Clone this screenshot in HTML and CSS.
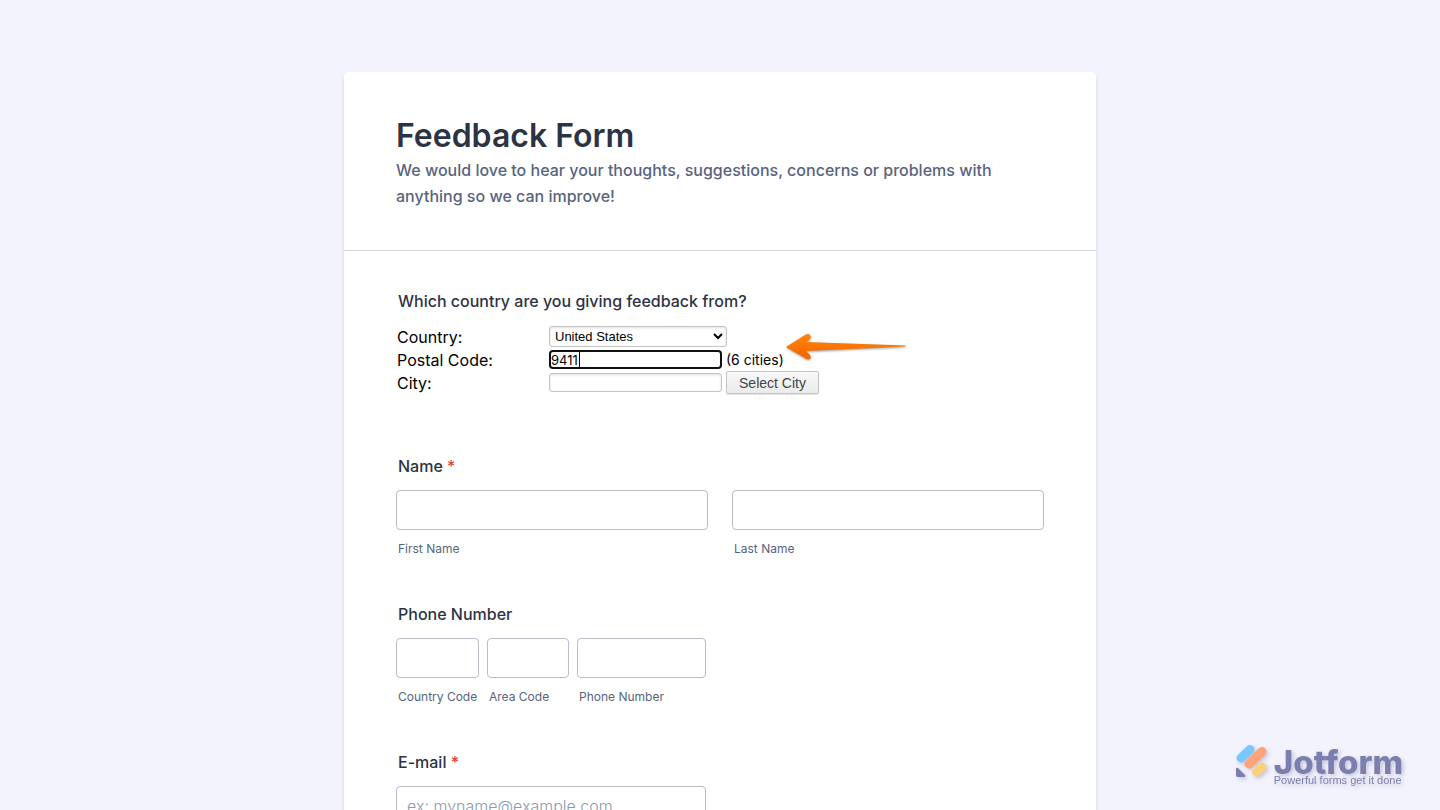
FILE: index.html
```html
<!DOCTYPE html>
<html lang="en">
<head>
<meta charset="utf-8">
<title>Feedback Form</title>
<meta name="viewport" content="width=device-width, initial-scale=1">
<link rel="stylesheet" href="styles.css">
</head>
<body>
<form class="card">
  <header class="header">
    <h1 class="title">Feedback Form</h1>
    <p class="subtitle">We would love to hear your thoughts, suggestions, concerns or problems with anything so we can improve!</p>
  </header>
  <div class="fields">
    <section class="group location">
      <h2 class="label">Which country are you giving feedback from?</h2>
      <div class="lookup">
        <div class="row">
          <label class="row-label" for="country">Country:</label>
          <select class="small-select" id="country"><option>United States</option></select>
        </div>
        <div class="row">
          <label class="row-label" for="postal">Postal Code:</label>
          <input class="small-input active" id="postal" type="text" value="9411">
          <span class="hint">(6 cities)</span>
        </div>
        <div class="row">
          <label class="row-label" for="city">City:</label>
          <input class="small-input" id="city" type="text">
          <button class="small-button" type="button">Select City</button>
        </div>
        <svg class="arrow" viewBox="0 0 124 34" aria-hidden="true">
          <defs><linearGradient id="orange" x1="0" y1="0" x2="0" y2="1"><stop offset="0.2" stop-color="#ff7f08"/><stop offset="0.8" stop-color="#f26a00"/></linearGradient></defs>
          <path d="M2 17 L21 5 Q24 3 26 5 Q28 8 25 10 L22 12 L121 15.500 Q122.500 16 121 16.500 L22 21 L25 24 Q28 27 26 29 Q23 30 21 28 Z" fill="url(#orange)"/>
        </svg>
      </div>
    </section>
    <section class="group">
      <h2 class="label">Name <span class="required">*</span></h2>
      <div class="names">
        <div class="cell"><input class="box" id="first" type="text"><label class="sub" for="first">First Name</label></div>
        <div class="cell"><input class="box" id="last" type="text"><label class="sub" for="last">Last Name</label></div>
      </div>
    </section>
    <section class="group">
      <h2 class="label">Phone Number</h2>
      <div class="phones">
        <div class="cell"><input class="box" id="cc" type="tel"><label class="sub" for="cc">Country Code</label></div>
        <div class="cell"><input class="box" id="area" type="tel"><label class="sub" for="area">Area Code</label></div>
        <div class="cell"><input class="box" id="phone" type="tel"><label class="sub" for="phone">Phone Number</label></div>
      </div>
    </section>
    <section class="group">
      <label class="label" for="email">E-mail <span class="required">*</span></label>
      <input class="box email" id="email" type="email" placeholder="ex: myname@example.com">
    </section>
  </div>
</form>
<div class="brand">
  <svg class="mark" viewBox="0 0 32 36" aria-hidden="true">
    <g stroke-linecap="round" fill="none" stroke-width="9">
      <path d="M5 15 L14 6.500" stroke="#78c8ff"/>
      <path d="M13 21 L26 8.500" stroke="#ffa478"/>
      <path d="M20.500 29 L26 24" stroke="#fbd27c"/>
    </g>
    <path d="M0 26 Q0 24 2 25 L9 32 Q10 34 8 34 H2 Q0 34 0 32 Z" fill="#7a7fae"/>
  </svg>
  <div class="words">
    <span class="name">Jotform</span>
    <span class="tagline">Powerful forms get it done</span>
  </div>
</div>
</body>
</html>
```
FILE: styles.css
```css
* { box-sizing: border-box; }
html { scrollbar-width: none; }
body {
  margin: 0;
  padding: 72px 16px 0;
  background: #f3f3fe;
  color: #2c3345;
  font-family: Inter, "Liberation Sans", sans-serif;
  font-size: 16px;
}
h1, h2, p { margin: 0; }
input, select, button { font-family: inherit; margin: 0; }
.card {
  max-width: 752px;
  margin: 0 auto;
  background: #fff;
  border-radius: 4px;
  box-shadow: 0 4px 4px rgba(87, 100, 126, 0.21);
}
.header { padding: 42px 52px 41px; border-bottom: 1px solid #d7d8e1; }
.title { font-size: 32px; line-height: 43px; font-weight: 600; }
.subtitle { line-height: 26px; font-weight: 500; color: #57647e; }
.fields { padding: 40px 52px 24px; }
.group { margin-bottom: 47px; }
.group.location { margin-bottom: 62px; }
.label { display: block; padding-left: 2px; margin-bottom: 14px; font-size: 16px; line-height: 20px; font-weight: 500; }
.required { color: #f23a3c; }
.lookup { position: relative; padding: 0 1px; color: #000; }
.row { display: grid; grid-template-columns: 148px auto auto 1fr; column-gap: 4px; align-items: center; height: 23px; }
.row-label { font-size: 16px; }
.small-select, .small-input { border: 1px solid #c4c4c4; border-radius: 3px; color: #000; background: #fff; box-shadow: inset 0 1px 3px rgba(0, 0, 0, 0.12); }
.small-select { width: 178px; height: 21px; font-family: "Liberation Sans", sans-serif; font-size: 13px; padding: 0 1px; grid-column: 2 / 4; }
.small-input { width: 173px; height: 19px; padding: 0 2px; font-size: 13px; }
.small-input.active { border: 2px solid #101010; padding: 0; border-radius: 4px; box-shadow: none; background: linear-gradient(#000, #000) 28px 0 / 1px 15px no-repeat #fff; }
.hint { font-size: 14px; }
.small-button { width: 93px; height: 23px; padding: 0; border: 1px solid #c4c4c4; border-radius: 2px; background: linear-gradient(#f8f8f8, #ebebeb); box-shadow: 0 1px 1px rgba(0, 0, 0, 0.12); color: #444; font-family: "Liberation Sans", sans-serif; font-size: 14px; }
.arrow { position: absolute; left: 388px; top: 5px; width: 124px; height: 34px; filter: drop-shadow(0 1px 1px rgba(0, 0, 0, 0.4)); }
.names { display: grid; grid-template-columns: 1fr 1fr; gap: 24px; }
.phones { display: grid; grid-template-columns: 83fr 82fr 129fr; gap: 8px; max-width: 310px; }
.cell { min-width: 0; }
.box { display: block; width: 100%; height: 40px; padding: 0 10px; border: 1px solid #b8bdc9; border-radius: 4px; background: #fff; color: #2c3345; font-size: 16px; }
.box::placeholder { color: #8d9ab2; font-weight: 300; }
.email { max-width: 310px; }
.sub { display: block; padding-left: 2px; margin-top: 11px; font-size: 12px; line-height: 16px; color: #57647e; white-space: nowrap; }
.brand { position: fixed; right: 37px; bottom: 24px; display: flex; align-items: flex-end; gap: 6px; filter: drop-shadow(2px 2px 2px rgba(60, 60, 110, 0.25)); color: #7a7fae; }
.mark { width: 32px; height: 36px; margin-bottom: 7px; overflow: visible; }
.words { display: flex; flex-direction: column; }
.name { font-size: 33px; line-height: 24px; font-weight: 800; }
.tagline { font-family: "Liberation Sans", sans-serif; font-size: 11px; line-height: 12px; }
```
